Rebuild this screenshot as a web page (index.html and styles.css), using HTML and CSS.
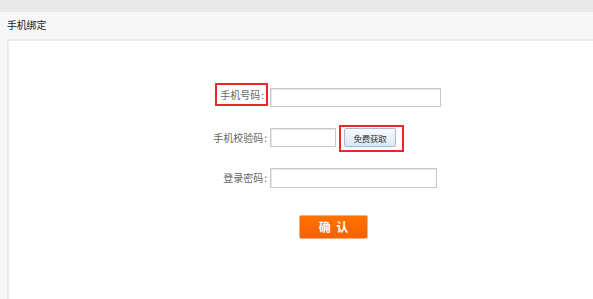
FILE: index.html
```html
<!DOCTYPE html>
<html lang="zh-CN">
<head>
<meta charset="utf-8">
<title>手机绑定</title>
<link rel="stylesheet" href="styles.css">
</head>
<body>
<div class="topbar"></div>
<div class="page">
  <div class="title">手机绑定</div>
  <div class="panel">
    <form class="form">
      <div class="row row1">
        <div class="label-col"><span class="label boxed">手机号码<span class="colon">:</span></span></div>
        <input class="input w-phone" type="text">
      </div>
      <div class="row row2">
        <div class="label-col"><span class="label">手机校验码<span class="colon">:</span></span></div>
        <input class="input w-code" type="text">
        <span class="btn-wrap"><button type="button" class="btn-get">免费获取</button></span>
      </div>
      <div class="row row3">
        <div class="label-col"><span class="label">登录密码<span class="colon">:</span></span></div>
        <input class="input w-pass" type="password">
      </div>
      <div class="row row-submit">
        <div class="label-col"></div>
        <button type="button" class="btn-ok">确&nbsp;&nbsp;认</button>
      </div>
    </form>
  </div>
</div>
</body>
</html>
```
FILE: styles.css
```css
html, body {
  margin: 0;
  padding: 0;
  height: 100%;
}
body {
  font-family: "Noto Sans CJK SC", "Liberation Sans", sans-serif;
  background: #f7f7f7;
  color: #555;
  overflow: hidden;
}
.topbar {
  height: 12px;
  background: #e8e8e8;
}
.page {
  padding-left: 7px;
}
.title {
  height: 27px;
  line-height: 25px;
  font-size: 10px;
  color: #222;
  letter-spacing: -0.2px;
}
.panel {
  background: #fff;
  border-top: 2px solid #ececec;
  border-left: 2px solid #ececec;
  height: 270px;
}
.form {
  padding-top: 42px;
  display: flex;
  flex-direction: column;
}
.row {
  display: flex;
  align-items: flex-start;
  height: 40px;
}
.label-col {
  width: 259px;
  flex: none;
  display: flex;
  justify-content: flex-end;
}
.label {
  font-size: 10px;
  color: #666;
  line-height: 19px;
  margin-top: 5px;
}
.colon {
  margin-left: 1px;
  margin-right: 1px;
}
.label.boxed {
  margin-top: 0;
  border: 2px solid #e8262c;
  padding: 0 1px 0 3px;
  line-height: 19px;
}
.row3 .label {
  line-height: 20px;
}
.input {
  box-sizing: border-box;
  margin: 5px 0 0 2px;
  height: 19px;
  border: 1px solid #c8c8c8;
  box-shadow: inset 1px 1px 1px #e6e6e6;
  background: #fff;
  padding: 0 3px;
  outline: none;
  font-size: 10px;
}
.w-phone { width: 171px; }
.w-code { width: 66px; }
.w-pass { width: 167px; height: 20px; }
.btn-wrap {
  margin: 2px 0 0 3px;
  border: 2px solid #e8262c;
  padding: 1px 6px 3px 3px;
  display: flex;
}
.btn-get {
  box-sizing: border-box;
  width: 52px;
  height: 19px;
  padding: 0;
  border: 1px solid #a9bace;
  border-radius: 2px;
  background: linear-gradient(#f7fafd, #dbe7f3);
  font-family: "Noto Sans CJK SC", sans-serif;
  font-size: 8.5px;
  color: #333;
  letter-spacing: -0.3px;
}
.row-submit {
  margin-top: 12px;
}
.btn-ok {
  margin-left: 31px;
  width: 69px;
  height: 24px;
  padding: 0;
  border: 1px solid #f3b27f;
  border-radius: 2px;
  background: linear-gradient(#ff7300, #f56100);
  color: #fff;
  font-family: "Noto Sans CJK SC", sans-serif;
  font-weight: bold;
  font-size: 12px;
  line-height: 22px;
}
```
